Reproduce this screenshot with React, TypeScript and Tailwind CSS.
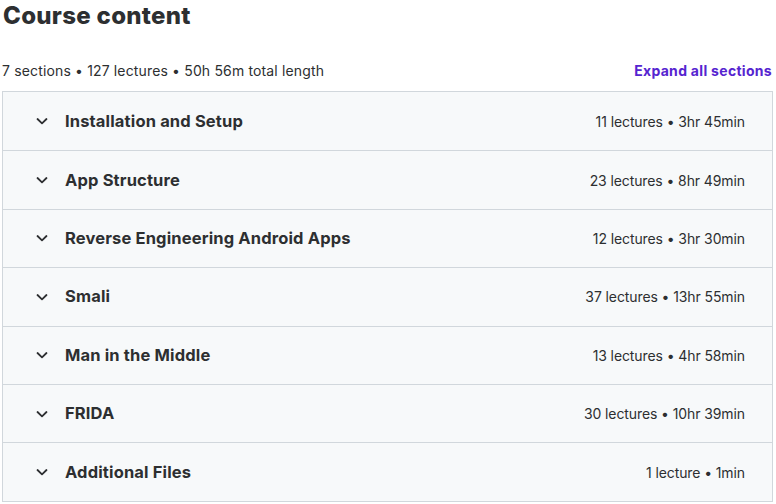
import React from 'react';

const sections = [
  { title: 'Installation and Setup', meta: '11 lectures • 3hr 45min' },
  { title: 'App Structure', meta: '23 lectures • 8hr 49min' },
  { title: 'Reverse Engineering Android Apps', meta: '12 lectures • 3hr 30min' },
  { title: 'Smali', meta: '37 lectures • 13hr 55min' },
  { title: 'Man in the Middle', meta: '13 lectures • 4hr 58min' },
  { title: 'FRIDA', meta: '30 lectures • 10hr 39min' },
  { title: 'Additional Files', meta: '1 lecture • 1min' },
];

const Chevron = () => (
  <svg width="12" height="12" viewBox="0 0 12 12" className="shrink-0">
    <path d="M1.5 4 L6 8.3 L10.5 4" fill="none" stroke="#2d2f31" strokeWidth="1.8" strokeLinecap="round" strokeLinejoin="round" />
  </svg>
);

const App: React.FC = () => {
  return (
    <div className="w-[776px] h-[504px] bg-white text-[#2d2f31] font-['Inter','Liberation_Sans',sans-serif] overflow-hidden">
      <h2 className="pl-[3px] pt-[1px] text-[24px] leading-[30px] font-extrabold tracking-[0.3px]">Course content</h2>

      {/* summary line */}
      <div className="flex items-center justify-between pl-[2px] pr-[4px] mt-[28px] h-[22px]">
        <span className="text-[14px] tracking-[0.15px]">7 sections • 127 lectures • 50h 56m total length</span>
        <button className="text-[14px] font-bold text-[#5624d0] tracking-[0.3px]">Expand all sections</button>
      </div>

      <div className="ml-[2px] w-[771px] mt-[10px] border border-[#d1d7dc]">
        {sections.map((s, i) => (
          <div
            key={i}
            className={`h-[58.4px] bg-[#f7f9fa] flex items-center pl-[33px] pr-[27px] ${i > 0 ? 'border-t border-[#d1d7dc]' : ''}`}
          >
            <Chevron />
            <span className="ml-[17px] text-[16.5px] font-bold tracking-[0.15px] flex-1">{s.title}</span>
            <span className="text-[14px] tracking-[-0.1px]">{s.meta}</span>
          </div>
        ))}
      </div>
    </div>
  );
};

export default App;
